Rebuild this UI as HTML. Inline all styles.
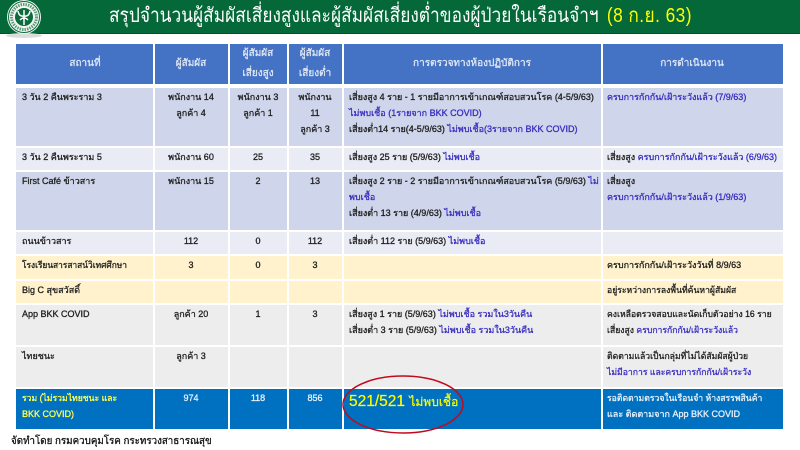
<!DOCTYPE html>
<html><head><meta charset="utf-8">
<style>
html,body{margin:0;padding:0;background:#fff}
#p{position:relative;width:800px;height:450px;overflow:hidden;background:#fff;font-family:"Liberation Sans","Noto Sans CJK SC",sans-serif;filter:blur(.3px)}
.c{position:absolute}
.t{position:absolute;white-space:nowrap;font-size:9px;line-height:12px;color:#222;font-weight:400;-webkit-text-stroke:.3px currentColor}
.m{transform:translateX(-50%)}
.s{transform:scaleX(.96);transform-origin:0 0}
.h{color:#dfe7f5;font-size:10px}
b{font-weight:400;color:#3a2fc0}
</style></head><body><div id="p">
<div class="c" style="left:0;top:0;width:800px;height:33px;background:#056839;border-bottom:1px solid #04522c"></div>
<div class="c" style="left:6px;top:33px;width:36px;height:5px;background:#dcdcdc;border-radius:50%"></div>
<svg class="c" style="left:6px;top:-1px" width="36" height="36" viewBox="0 0 36 36">
<circle cx="18" cy="18" r="17" fill="#f2f5f1"/><circle cx="18" cy="18" r="15.5" fill="none" stroke="#0a6b3c" stroke-width="1"/><circle cx="18" cy="18" r="12.5" fill="none" stroke="#5d9a7a" stroke-width="3" stroke-dasharray="1.5 1"/><circle cx="18" cy="18" r="10" fill="#f2f5f1"/><circle cx="18" cy="18" r="9" fill="#0a6b3c"/>
<path d="M18 11V26M12 12Q13 18 18 17Q23 18 24 12M14 21Q18 17 22 21" stroke="#fff" stroke-width="1.5" fill="none"/>
</svg>
<div class="t" style="left:109px;top:1px;font-size:20px;line-height:30px;color:#fff;-webkit-text-stroke:0;transform:scaleX(.865);transform-origin:0 0">สรุปจำนวนผู้สัมผัสเสี่ยงสูงและผู้สัมผัสเสี่ยงต่ำของผู้ป่วยในเรือนจำฯ <span style="color:#ffff00;margin-left:4px;letter-spacing:.5px">(8 ก.ย. 63)</span></div>

<div class="c" style="left:16px;top:44px;width:137px;height:40px;background:#4472c4"></div>
<div class="c" style="left:155px;top:44px;width:73px;height:40px;background:#4472c4"></div>
<div class="c" style="left:230px;top:44px;width:57px;height:40px;background:#4472c4"></div>
<div class="c" style="left:289px;top:44px;width:53px;height:40px;background:#4472c4"></div>
<div class="c" style="left:344px;top:44px;width:257px;height:40px;background:#4472c4"></div>
<div class="c" style="left:603px;top:44px;width:180px;height:40px;background:#4472c4"></div>

<div class="c" style="left:16px;top:88px;width:137px;height:58px;background:#cfd5ea"></div><div class="c" style="left:155px;top:88px;width:73px;height:58px;background:#cfd5ea"></div><div class="c" style="left:230px;top:88px;width:57px;height:58px;background:#cfd5ea"></div><div class="c" style="left:289px;top:88px;width:53px;height:58px;background:#cfd5ea"></div><div class="c" style="left:344px;top:88px;width:257px;height:58px;background:#cfd5ea"></div><div class="c" style="left:603px;top:88px;width:180px;height:58px;background:#cfd5ea"></div>
<div class="c" style="left:16px;top:148px;width:137px;height:22px;background:#e9ebf5"></div><div class="c" style="left:155px;top:148px;width:73px;height:22px;background:#e9ebf5"></div><div class="c" style="left:230px;top:148px;width:57px;height:22px;background:#e9ebf5"></div><div class="c" style="left:289px;top:148px;width:53px;height:22px;background:#e9ebf5"></div><div class="c" style="left:344px;top:148px;width:257px;height:22px;background:#e9ebf5"></div><div class="c" style="left:603px;top:148px;width:180px;height:22px;background:#e9ebf5"></div>
<div class="c" style="left:16px;top:172px;width:137px;height:58px;background:#cfd5ea"></div><div class="c" style="left:155px;top:172px;width:73px;height:58px;background:#cfd5ea"></div><div class="c" style="left:230px;top:172px;width:57px;height:58px;background:#cfd5ea"></div><div class="c" style="left:289px;top:172px;width:53px;height:58px;background:#cfd5ea"></div><div class="c" style="left:344px;top:172px;width:257px;height:58px;background:#cfd5ea"></div><div class="c" style="left:603px;top:172px;width:180px;height:58px;background:#cfd5ea"></div>
<div class="c" style="left:16px;top:232px;width:137px;height:22px;background:#e9ebf5"></div><div class="c" style="left:155px;top:232px;width:73px;height:22px;background:#e9ebf5"></div><div class="c" style="left:230px;top:232px;width:57px;height:22px;background:#e9ebf5"></div><div class="c" style="left:289px;top:232px;width:53px;height:22px;background:#e9ebf5"></div><div class="c" style="left:344px;top:232px;width:257px;height:22px;background:#e9ebf5"></div><div class="c" style="left:603px;top:232px;width:180px;height:22px;background:#e9ebf5"></div>
<div class="c" style="left:16px;top:256px;width:137px;height:23px;background:#fff2cc"></div><div class="c" style="left:155px;top:256px;width:73px;height:23px;background:#fff2cc"></div><div class="c" style="left:230px;top:256px;width:57px;height:23px;background:#fff2cc"></div><div class="c" style="left:289px;top:256px;width:53px;height:23px;background:#fff2cc"></div><div class="c" style="left:344px;top:256px;width:257px;height:23px;background:#fff2cc"></div><div class="c" style="left:603px;top:256px;width:180px;height:23px;background:#fff2cc"></div>
<div class="c" style="left:16px;top:281px;width:137px;height:22px;background:#fff2cc"></div><div class="c" style="left:155px;top:281px;width:73px;height:22px;background:#fff2cc"></div><div class="c" style="left:230px;top:281px;width:57px;height:22px;background:#fff2cc"></div><div class="c" style="left:289px;top:281px;width:53px;height:22px;background:#fff2cc"></div><div class="c" style="left:344px;top:281px;width:257px;height:22px;background:#fff2cc"></div><div class="c" style="left:603px;top:281px;width:180px;height:22px;background:#fff2cc"></div>
<div class="c" style="left:16px;top:305px;width:137px;height:40px;background:#ededed"></div><div class="c" style="left:155px;top:305px;width:73px;height:40px;background:#ededed"></div><div class="c" style="left:230px;top:305px;width:57px;height:40px;background:#ededed"></div><div class="c" style="left:289px;top:305px;width:53px;height:40px;background:#ededed"></div><div class="c" style="left:344px;top:305px;width:257px;height:40px;background:#ededed"></div><div class="c" style="left:603px;top:305px;width:180px;height:40px;background:#ededed"></div>
<div class="c" style="left:16px;top:347px;width:137px;height:40px;background:#ededed"></div><div class="c" style="left:155px;top:347px;width:73px;height:40px;background:#ededed"></div><div class="c" style="left:230px;top:347px;width:57px;height:40px;background:#ededed"></div><div class="c" style="left:289px;top:347px;width:53px;height:40px;background:#ededed"></div><div class="c" style="left:344px;top:347px;width:257px;height:40px;background:#ededed"></div><div class="c" style="left:603px;top:347px;width:180px;height:40px;background:#ededed"></div>
<div class="c" style="left:16px;top:389px;width:137px;height:40px;background:#0070c0"></div><div class="c" style="left:155px;top:389px;width:73px;height:40px;background:#0070c0"></div><div class="c" style="left:230px;top:389px;width:57px;height:40px;background:#0070c0"></div><div class="c" style="left:289px;top:389px;width:53px;height:40px;background:#0070c0"></div><div class="c" style="left:344px;top:389px;width:257px;height:40px;background:#0070c0"></div><div class="c" style="left:603px;top:389px;width:180px;height:40px;background:#0070c0"></div>

<div class="t m h" style="left:85px;top:58px">สถานที่</div>
<div class="t m h" style="left:191px;top:58px">ผู้สัมผัส</div>
<div class="t m h" style="left:258px;top:48px">ผู้สัมผัส</div><div class="t m h" style="left:258px;top:68px">เสี่ยงสูง</div>
<div class="t m h" style="left:315px;top:48px">ผู้สัมผัส</div><div class="t m h" style="left:315px;top:68px">เสี่ยงต่ำ</div>
<div class="t m h" style="left:472px;top:58px">การตรวจทางห้องปฏิบัติการ</div>
<div class="t m h" style="left:692px;top:58px">การดำเนินงาน</div>

<div class="t" style="left:22px;top:91px">3 วัน 2 คืนพระราม 3</div>
<div class="t m" style="left:191px;top:91px">พนักงาน 14</div><div class="t m" style="left:191px;top:107px">ลูกค้า 4</div>
<div class="t m" style="left:258px;top:91px">พนักงาน 3</div><div class="t m" style="left:258px;top:107px">ลูกค้า 1</div>
<div class="t m" style="left:315px;top:91px">พนักงาน</div><div class="t m" style="left:315px;top:107px">11</div><div class="t m" style="left:315px;top:123px">ลูกค้า 3</div>
<div class="t" style="left:349px;top:91px">เสี่ยงสูง 4 ราย - 1 รายมีอาการเข้าเกณฑ์สอบสวนโรค (4-5/9/63)</div>
<div class="t" style="left:349px;top:107px"><b>ไม่พบเชื้อ (1รายจาก BKK COVID)</b></div>
<div class="t" style="left:349px;top:123px">เสี่ยงต่ำ14 ราย(4-5/9/63) <b>ไม่พบเชื้อ(3รายจาก BKK COVID)</b></div>
<div class="t" style="left:607px;top:91px"><b>ครบการกักกัน/เฝ้าระวังแล้ว (7/9/63)</b></div>

<div class="t" style="left:22px;top:151px">3 วัน 2 คืนพระราม 5</div>
<div class="t m" style="left:191px;top:151px">พนักงาน 60</div><div class="t m" style="left:258px;top:151px">25</div><div class="t m" style="left:315px;top:151px">35</div>
<div class="t" style="left:349px;top:151px">เสี่ยงสูง 25 ราย (5/9/63) <b>ไม่พบเชื้อ</b></div>
<div class="t" style="left:607px;top:151px">เสี่ยงสูง <b>ครบการกักกัน/เฝ้าระวังแล้ว (6/9/63)</b></div>

<div class="t" style="left:22px;top:175px">First Café ข้าวสาร</div>
<div class="t m" style="left:191px;top:175px">พนักงาน 15</div><div class="t m" style="left:258px;top:175px">2</div><div class="t m" style="left:315px;top:175px">13</div>
<div class="t" style="left:349px;top:175px">เสี่ยงสูง 2 ราย - 2 รายมีอาการเข้าเกณฑ์สอบสวนโรค (5/9/63) <b>ไม่</b></div>
<div class="t" style="left:349px;top:191px"><b>พบเชื้อ</b></div>
<div class="t" style="left:349px;top:207px">เสี่ยงต่ำ 13 ราย (4/9/63) <b>ไม่พบเชื้อ</b></div>
<div class="t" style="left:607px;top:175px">เสี่ยงสูง</div>
<div class="t" style="left:607px;top:191px"><b>ครบการกักกัน/เฝ้าระวังแล้ว (1/9/63)</b></div>

<div class="t" style="left:22px;top:235px">ถนนข้าวสาร</div>
<div class="t m" style="left:191px;top:235px">112</div><div class="t m" style="left:258px;top:235px">0</div><div class="t m" style="left:315px;top:235px">112</div>
<div class="t" style="left:349px;top:235px">เสี่ยงต่ำ 112 ราย (5/9/63) <b>ไม่พบเชื้อ</b></div>

<div class="t" style="left:22px;top:259px;transform:scaleX(.93);transform-origin:0 0">โรงเรียนสารสาสน์วิเทศศึกษา</div>
<div class="t m" style="left:191px;top:259px">3</div><div class="t m" style="left:258px;top:259px">0</div><div class="t m" style="left:315px;top:259px">3</div>
<div class="t" style="left:607px;top:259px">ครบการกักกัน/เฝ้าระวังวันที่ 8/9/63</div>

<div class="t" style="left:22px;top:284px">Big C สุขสวัสดิ์</div>
<div class="t s" style="left:607px;top:284px">อยู่ระหว่างการลงพื้นที่ค้นหาผู้สัมผัส</div>

<div class="t" style="left:22px;top:308px">App BKK COVID</div>
<div class="t m" style="left:191px;top:308px">ลูกค้า 20</div><div class="t m" style="left:258px;top:308px">1</div><div class="t m" style="left:315px;top:308px">3</div>
<div class="t" style="left:349px;top:308px">เสี่ยงสูง 1 ราย (5/9/63) <b>ไม่พบเชื้อ รวมใน3วันคืน</b></div>
<div class="t" style="left:349px;top:324px">เสี่ยงต่ำ 3 ราย (5/9/63) <b>ไม่พบเชื้อ รวมใน3วันคืน</b></div>
<div class="t s" style="left:607px;top:308px">คงเหลือตรวจสอบและนัดเก็บตัวอย่าง 16 ราย</div>
<div class="t s" style="left:607px;top:324px">เสี่ยงสูง <b>ครบการกักกัน/เฝ้าระวังแล้ว</b></div>

<div class="t" style="left:22px;top:350px">ไทยชนะ</div>
<div class="t m" style="left:191px;top:350px">ลูกค้า 3</div>
<div class="t s" style="left:607px;top:350px">ติดตามแล้วเป็นกลุ่มที่ไม่ได้สัมผัสผู้ป่วย</div>
<div class="t s" style="left:607px;top:366px"><b>ไม่มีอาการ และครบการกักกัน/เฝ้าระวัง</b></div>

<div class="t s" style="left:22px;top:392px;color:#ffff4d">รวม  (ไม่รวมไทยชนะ และ</div>
<div class="t" style="left:22px;top:408px;color:#ffff4d">BKK  COVID)</div>
<div class="t m" style="left:191px;top:392px;color:#e6f0fa">974</div><div class="t m" style="left:258px;top:392px;color:#e6f0fa">118</div><div class="t m" style="left:315px;top:392px;color:#e6f0fa">856</div>
<div class="t" style="left:349px;top:393px;font-size:15.5px;line-height:18px;color:#ffff00;-webkit-text-stroke:.2px #ffff00">521/521 <span style="font-size:12px">ไม่พบเชื้อ</span></div>
<div class="t s" style="left:607px;top:392px;color:#e6f0fa">รอติดตามตรวจในเรือนจำ  ห้างสรรพสินค้า</div>
<div class="t" style="left:607px;top:408px;color:#e6f0fa">และ ติดตามจาก App BKK COVID</div>
<svg class="c" style="left:338px;top:372px" width="130" height="66" viewBox="0 0 130 66"><ellipse cx="65" cy="32.5" rx="60" ry="28.5" fill="none" stroke="#c00a1e" stroke-width="1.5"/></svg>
<div class="t" style="left:11px;top:434px;font-size:10.5px;line-height:14px;color:#111;transform:scaleX(.93);transform-origin:0 0">จัดทำโดย กรมควบคุมโรค กระทรวงสาธารณสุข</div>
</div></body></html>
